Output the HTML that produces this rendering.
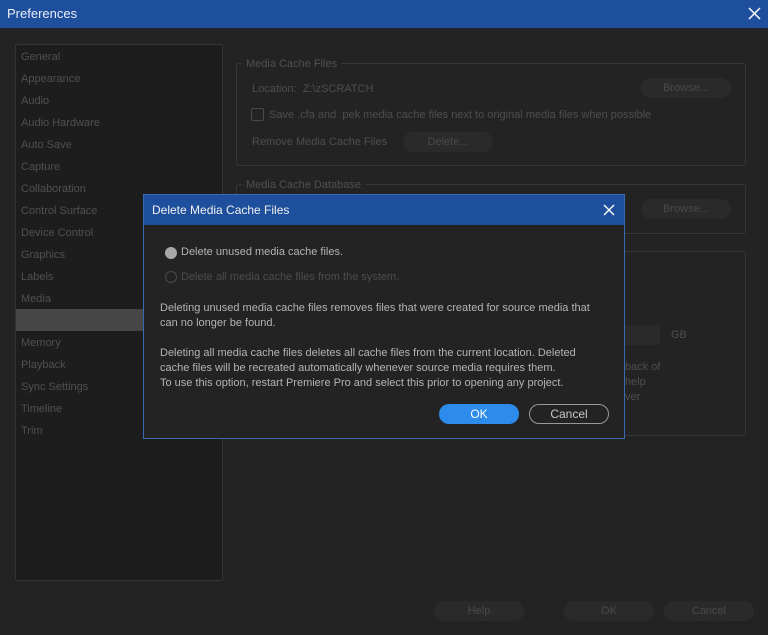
<!DOCTYPE html>
<html><head><style>
*{margin:0;padding:0;box-sizing:border-box}
body{width:768px;height:635px;background:#232323;font-family:"Liberation Sans",sans-serif;position:relative;overflow:hidden;font-size:11px}
.a{position:absolute;white-space:nowrap}
.tb{left:0;top:0;width:768px;height:28px;background:#1e4f9c}
.side{left:15px;top:44px;width:208px;height:537px;background:#1d1d1d;border:1px solid #343434;border-radius:2px}
.si{left:21px;color:#505050;font-size:11px}
.grp{border:1px solid #363636;border-radius:3px}
.lbl{color:#505050;background:#232323;padding:0 4px}
.btn{background:#2a2a2a;border-radius:10px;color:#4a4a4a;text-align:center;font-size:11px}
.dlg{left:143px;top:194px;width:482px;height:245px;background:#232323;border:1px solid #3a6ab2}
.dt{left:0;top:0;width:480px;height:30px;background:#1e4f9c}
.p{color:#b4b4b4;font-size:11px;line-height:15px}
</style></head><body>
<div class="a tb"></div>
<div class="a" style="left:7px;top:6px;color:#e8eef8;font-size:13px">Preferences</div>
<svg class="a" style="left:748px;top:7px" width="13" height="13"><path d="M1 1L12 12M12 1L1 12" stroke="#fff" stroke-width="1.5"/></svg>

<div class="a side"></div>
<div class="a" style="left:16px;top:309px;width:140px;height:22px;background:#474747"></div>
<div class="a si" style="top:51px">General</div>
<div class="a si" style="top:73px">Appearance</div>
<div class="a si" style="top:95px">Audio</div>
<div class="a si" style="top:117px">Audio Hardware</div>
<div class="a si" style="top:139px">Auto Save</div>
<div class="a si" style="top:161px">Capture</div>
<div class="a si" style="top:183px">Collaboration</div>
<div class="a si" style="top:205px">Control Surface</div>
<div class="a si" style="top:227px">Device Control</div>
<div class="a si" style="top:249px">Graphics</div>
<div class="a si" style="top:271px">Labels</div>
<div class="a si" style="top:293px">Media</div>
<div class="a si" style="top:337px">Memory</div>
<div class="a si" style="top:359px">Playback</div>
<div class="a si" style="top:381px">Sync Settings</div>
<div class="a si" style="top:403px">Timeline</div>
<div class="a si" style="top:425px">Trim</div>

<div class="a grp" style="left:236px;top:63px;width:510px;height:103px"></div>
<div class="a lbl" style="left:242px;top:58px">Media Cache Files</div>
<div class="a" style="left:252px;top:83px;color:#4e4e4e">Location:&nbsp; Z:\zSCRATCH</div>
<div class="a btn" style="left:641px;top:78px;width:90px;height:20px;line-height:20px">Browse...</div>
<div class="a" style="left:251px;top:108px;width:13px;height:13px;border:1px solid #4a4a4a;border-radius:2px"></div>
<div class="a" style="left:269px;top:109px;color:#4e4e4e">Save .cfa and .pek media cache files next to original media files when possible</div>
<div class="a" style="left:252px;top:136px;color:#4e4e4e">Remove Media Cache Files</div>
<div class="a btn" style="left:403px;top:132px;width:90px;height:20px;line-height:20px">Delete...</div>

<div class="a grp" style="left:236px;top:184px;width:510px;height:50px"></div>
<div class="a lbl" style="left:242px;top:179px">Media Cache Database</div>
<div class="a btn" style="left:641px;top:199px;width:90px;height:20px;line-height:20px">Browse...</div>

<div class="a grp" style="left:236px;top:251px;width:510px;height:185px"></div>
<div class="a" style="left:620px;top:325px;width:40px;height:20px;background:#2a2a2a"></div>
<div class="a" style="left:671px;top:329px;color:#4e4e4e">GB</div>
<div class="a" style="left:625px;top:360px;color:#4e4e4e;line-height:15px">back of<br>help<br>ver</div>

<div class="a btn" style="left:434px;top:601px;width:90px;height:20px;line-height:20px">Help</div>
<div class="a btn" style="left:564px;top:601px;width:90px;height:20px;line-height:20px">OK</div>
<div class="a btn" style="left:664px;top:601px;width:90px;height:20px;line-height:20px">Cancel</div>
<div class="a" style="left:697px;top:616px;color:#222;font-size:13px">wtvid.com</div>

<div class="a dlg">
<div class="a dt"></div>
<div class="a" style="left:8px;top:8px;color:#f0f0f0;font-size:12px">Delete Media Cache Files</div>
<svg class="a" style="left:459px;top:9px" width="12" height="12"><path d="M1 1L11 11M11 1L1 11" stroke="#fff" stroke-width="1.4"/></svg>
<div class="a" style="left:21px;top:52px;width:12px;height:12px;border-radius:50%;background:#a8a8a8"></div>
<div class="a p" style="left:37px;top:50px">Delete unused media cache files.</div>
<div class="a" style="left:21px;top:76px;width:12px;height:12px;border-radius:50%;border:1.5px solid #4a4a4a"></div>
<div class="a p" style="left:37px;top:75px;color:#4c4c4c">Delete all media cache files from the system.</div>
<div class="a p" style="left:16px;top:106px">Deleting unused media cache files removes files that were created for source media that<br>can no longer be found.</div>
<div class="a p" style="left:16px;top:151px">Deleting all media cache files deletes all cache files from the current location. Deleted<br>cache files will be recreated automatically whenever source media requires them.<br>To use this option, restart Premiere Pro and select this prior to opening any project.</div>
<div class="a" style="left:295px;top:209px;width:80px;height:20px;border-radius:10px;background:#2d8ceb;color:#fff;text-align:center;line-height:20px;font-size:12px">OK</div>
<div class="a" style="left:385px;top:209px;width:80px;height:20px;border-radius:10px;border:1px solid #999;color:#c8c8c8;text-align:center;line-height:18px;font-size:12px">Cancel</div>
</div>
</body></html>
